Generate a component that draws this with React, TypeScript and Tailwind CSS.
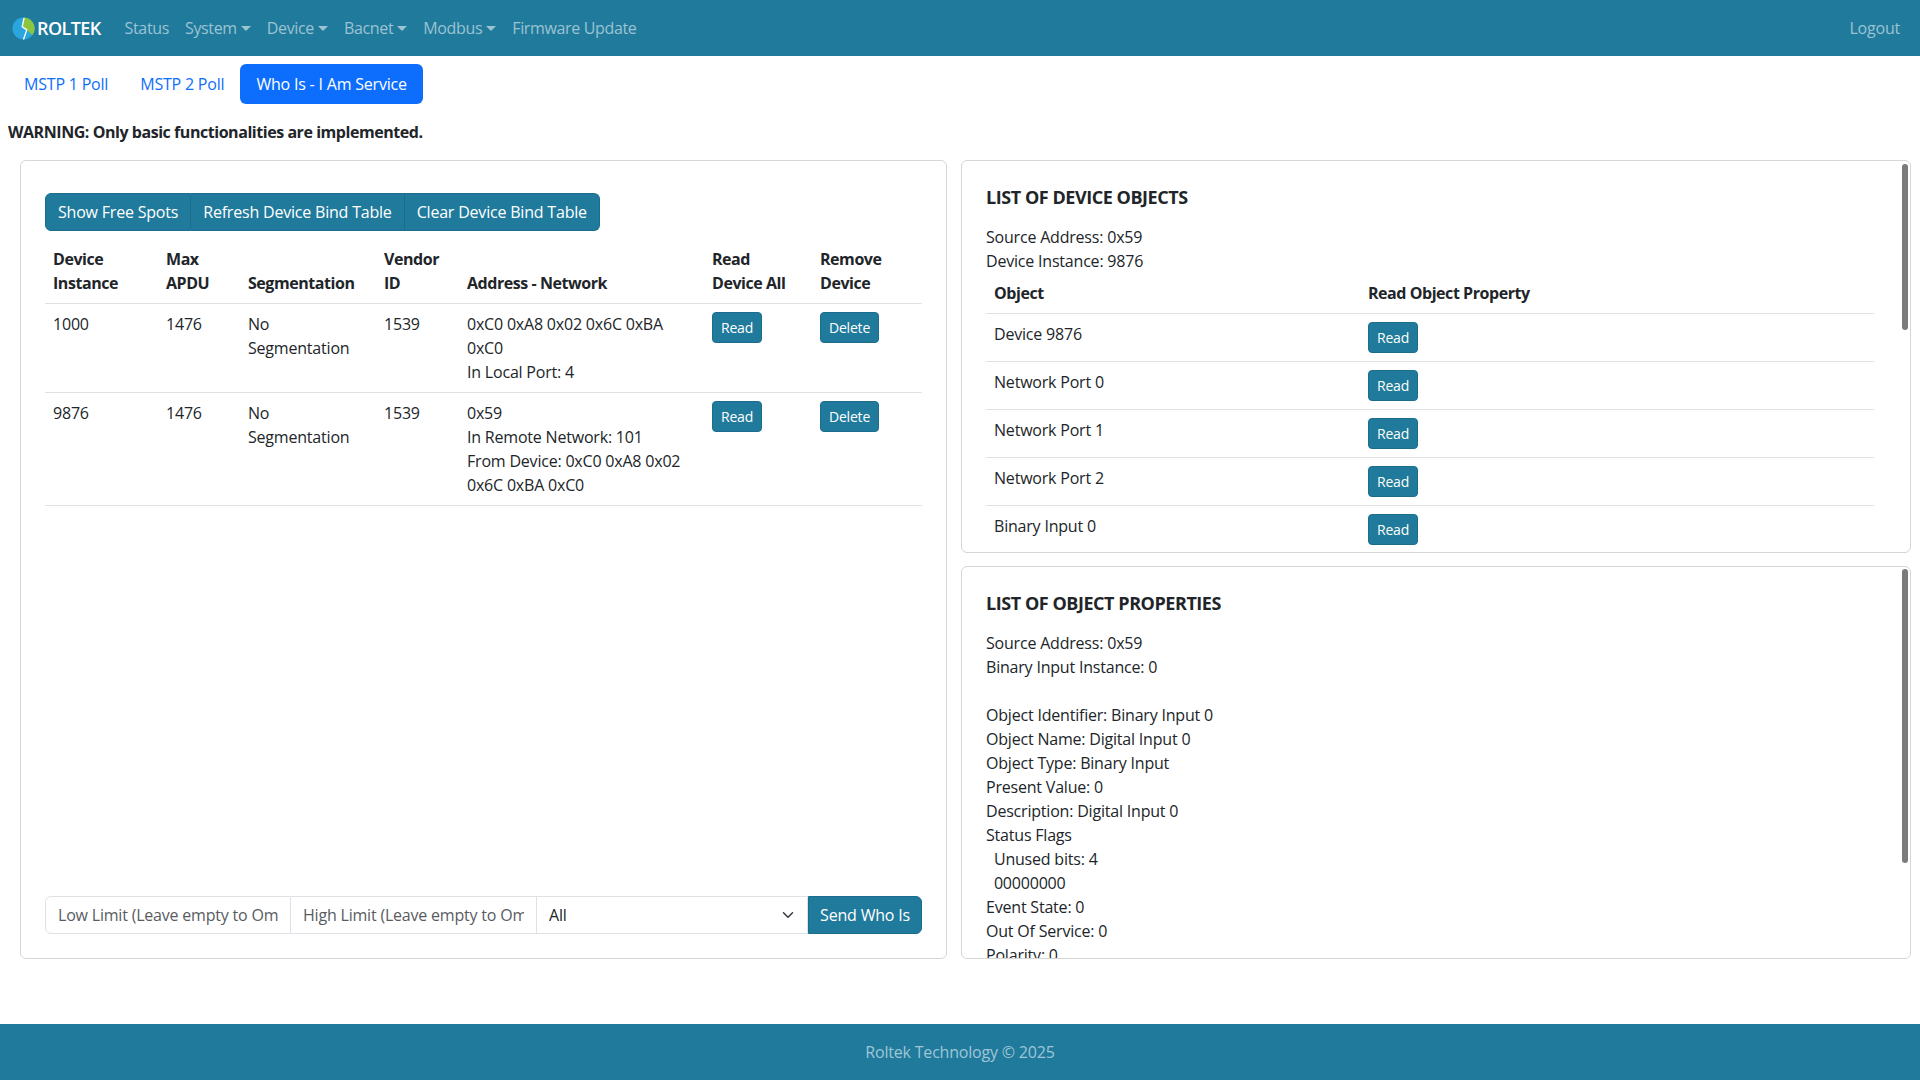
import React from 'react';

// only the rows that show inside the card before it is scrolled
const objects = ['Device 9876', 'Network Port 0', 'Network Port 1', 'Network Port 2', 'Binary Input 0'];

const properties = [
  'Object Identifier: Binary Input 0',
  'Object Name: Digital Input 0',
  'Object Type: Binary Input',
  'Present Value: 0',
  'Description: Digital Input 0',
  'Status Flags',
  '\u00a0\u00a0Unused bits: 4',
  '\u00a0\u00a000000000',
  'Event State: 0',
  'Out Of Service: 0',
  'Polarity: 0',
];

function Caret() {
  return (
    <span className="ml-[4px] inline-block align-[3px] border-t-[5px] border-x-[5px] border-x-transparent border-t-current" />
  );
}

function Logo() {
  return (
    <svg width="23" height="23" viewBox="0 0 24 24" className="shrink-0">
      <circle cx="12" cy="12" r="11.5" fill="#2aa5de" />
      <path d="M12.6 0.6 A11.4 11.4 0 0 1 21.2 19 L15.4 13.4 L10.6 10.2 Z" fill="#8cc63f" />
      <path d="M12.6 0.8 L10.6 10.2 L15.4 13.4 L12 23.4" fill="none" stroke="#ffffff" strokeWidth="1.4" strokeLinejoin="round" />
    </svg>
  );
}

function SmallBtn({ children }: { children: React.ReactNode }) {
  return (
    <button className="rounded-[4px] border border-[#1c6d8c] bg-[#207a9c] px-2 py-1 text-[14px] leading-[21px] text-white">
      {children}
    </button>
  );
}

// card with a scrolled-to-top look; the thumb is drawn over the content
function ScrollCard({ thumbTop, thumbHeight, children }: { thumbTop: string; thumbHeight: string; children: React.ReactNode }) {
  return (
    <div className="relative h-[393px] overflow-hidden rounded-[6px] border border-[#d6d6d6]">
      <div className="py-6 pl-6 pr-[36px]">{children}</div>
      <div className={`absolute right-[2px] w-[6px] rounded-full bg-[#7b7b7b] ${thumbTop} ${thumbHeight}`} />
    </div>
  );
}

export default function App() {
  return (
    <div className="flex min-h-screen flex-col bg-white font-['Open_Sans',sans-serif] text-[16px] leading-[24px] tracking-[-0.2px] text-[#212529]">
      {/* navbar */}
      <nav className="flex h-14 items-center bg-[#207a9c] px-3">
        <div className="flex items-center gap-[2px]">
          <Logo />
          <span className="text-[18px] font-semibold tracking-[-0.6px] text-white">ROLTEK</span>
        </div>
        <div className="ml-[16px] flex items-center tracking-[-0.35px] text-[#9bc3d2]">
          <span className="px-2">Status</span>
          <span className="px-2">System<Caret /></span>
          <span className="px-2">Device<Caret /></span>
          <span className="px-2">Bacnet<Caret /></span>
          <span className="px-2">Modbus<Caret /></span>
          <span className="px-2">Firmware Update</span>
        </div>
        <span className="ml-auto px-2 text-[#9bc3d2]">Logout</span>
      </nav>

      <main className="px-2">
        <div className="mt-2 flex">
          <span className="px-4 py-2 text-[#0d6efd]">MSTP 1 Poll</span>
          <span className="px-4 py-2 text-[#0d6efd]">MSTP 2 Poll</span>
          <span className="rounded-[6px] bg-[#0d6efd] px-4 py-2 text-white">Who Is - I Am Service</span>
        </div>

        <p className="mt-4 font-bold tracking-[-0.45px]">WARNING: Only basic functionalities are implemented.</p>

        <div className="mt-4 flex gap-[14px] pl-[12px]">
          {/* left card */}
          <div className="flex h-[799px] w-[927px] flex-col rounded-[6px] border border-[#d6d6d6] px-6 pb-6 pt-8">
            <div className="flex self-start">
              <button className="rounded-l-[6px] border border-[#1c6d8c] bg-[#207a9c] px-3 py-[6px] text-white">Show Free Spots</button>
              <button className="border border-l-0 border-[#1c6d8c] bg-[#207a9c] px-3 py-[6px] text-white">Refresh Device Bind Table</button>
              <button className="rounded-r-[6px] border border-l-0 border-[#1c6d8c] bg-[#207a9c] px-3 py-[6px] text-white">Clear Device Bind Table</button>
            </div>

            <table className="mt-2 w-full table-fixed border-collapse text-left">
              <thead className="tracking-[-0.45px]">
                <tr className="border-b border-[#dee2e6] align-bottom">
                  <th className="w-[113px] p-2 font-bold">Device<br />Instance</th>
                  <th className="w-[82px] p-2 font-bold">Max<br />APDU</th>
                  <th className="w-[136px] p-2 font-bold">Segmentation</th>
                  <th className="w-[83px] p-2 font-bold">Vendor<br />ID</th>
                  <th className="w-[245px] p-2 font-bold">Address - Network</th>
                  <th className="w-[108px] p-2 font-bold">Read<br />Device All</th>
                  <th className="p-2 font-bold">Remove<br />Device</th>
                </tr>
              </thead>
              <tbody>
                <tr className="border-b border-[#dee2e6] align-top">
                  <td className="p-2">1000</td>
                  <td className="p-2">1476</td>
                  <td className="p-2">No<br />Segmentation</td>
                  <td className="p-2">1539</td>
                  <td className="whitespace-nowrap p-2">0xC0 0xA8 0x02 0x6C 0xBA<br />0xC0<br />In Local Port: 4</td>
                  <td className="p-2"><SmallBtn>Read</SmallBtn></td>
                  <td className="p-2"><SmallBtn>Delete</SmallBtn></td>
                </tr>
                <tr className="border-b border-[#dee2e6] align-top">
                  <td className="p-2">9876</td>
                  <td className="p-2">1476</td>
                  <td className="p-2">No<br />Segmentation</td>
                  <td className="p-2">1539</td>
                  <td className="whitespace-nowrap p-2">0x59<br />In Remote Network: 101<br />From Device: 0xC0 0xA8 0x02<br />0x6C 0xBA 0xC0</td>
                  <td className="p-2"><SmallBtn>Read</SmallBtn></td>
                  <td className="p-2"><SmallBtn>Delete</SmallBtn></td>
                </tr>
              </tbody>
            </table>

            <div className="mt-auto flex h-[38px]">
              <input
                placeholder="Low Limit (Leave empty to Omit)"
                className="w-[246px] min-w-0 rounded-l-[6px] border border-[#dee2e6] px-3 py-[6px] placeholder:text-[#595c5f] focus:outline-none"
              />
              <input
                placeholder="High Limit (Leave empty to Omit)"
                className="w-[246px] min-w-0 border border-l-0 border-[#dee2e6] px-3 py-[6px] placeholder:text-[#595c5f] focus:outline-none"
              />
              <div className="relative flex-1">
                <select className="h-full w-full appearance-none border border-l-0 border-[#dee2e6] bg-white pl-3 pr-9 text-[#212529] focus:outline-none">
                  <option>All</option>
                </select>
                <svg className="pointer-events-none absolute right-3 top-[13px]" width="16" height="12" viewBox="0 0 16 16">
                  <path d="m2 5 6 6 6-6" fill="none" stroke="#343a40" strokeWidth="2" strokeLinecap="round" strokeLinejoin="round" />
                </svg>
              </div>
              <button className="w-[114px] rounded-r-[6px] border border-[#1c6d8c] bg-[#207a9c] text-white">Send Who Is</button>
            </div>
          </div>

          {/* right column */}
          <div className="flex w-[950px] flex-col gap-[13px]">
            <ScrollCard thumbTop="top-[3px]" thumbHeight="h-[166px]">
              <h5 className="mb-4 text-[18px] font-bold tracking-[-0.45px]">LIST OF DEVICE OBJECTS</h5>
              <div>Source Address: 0x59</div>
              <div>Device Instance: 9876</div>
              <table className="w-full table-fixed border-collapse text-left">
                <thead className="tracking-[-0.45px]">
                  <tr className="border-b border-[#dee2e6]">
                    <th className="w-[374px] p-2 font-bold">Object</th>
                    <th className="p-2 font-bold">Read Object Property</th>
                  </tr>
                </thead>
                <tbody>
                  {objects.map((o) => (
                    <tr key={o} className="border-b border-[#dee2e6] align-top">
                      <td className="p-2">{o}</td>
                      <td className="p-2"><SmallBtn>Read</SmallBtn></td>
                    </tr>
                  ))}
                </tbody>
              </table>
            </ScrollCard>

            <ScrollCard thumbTop="top-[2px]" thumbHeight="h-[294px]">
              <h5 className="mb-4 text-[18px] font-bold tracking-[-0.45px]">LIST OF OBJECT PROPERTIES</h5>
              <div>Source Address: 0x59</div>
              <div>Binary Input Instance: 0</div>
              <div>&nbsp;</div>
              {properties.map((p) => (
                <div key={p} className="whitespace-pre">{p}</div>
              ))}
            </ScrollCard>
          </div>
        </div>
      </main>

      <footer className="mt-auto flex h-14 items-center justify-center bg-[#207a9c] text-[#9fc6d5]">
        Roltek Technology © 2025
      </footer>
    </div>
  );
}
